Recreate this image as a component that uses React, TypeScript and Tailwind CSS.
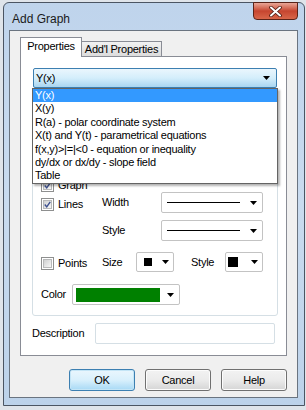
import React from 'react';

const font = { fontFamily: '"Liberation Sans", Arial, sans-serif' };

const Arrow: React.FC = () => (
  <svg width="7" height="4" viewBox="0 0 7 4" className="shrink-0">
    <path d="M0 0 H7 L3.5 4 Z" fill="#000" />
  </svg>
);

const Check: React.FC<{ checked?: boolean }> = ({ checked }) => (
  <div className="w-[13px] h-[13px] shrink-0 border border-[#8e8f8f] bg-white p-px">
    <div className="w-full h-full bg-gradient-to-br from-[#cfd0d1] to-[#f7f7f7] border border-[#b8b9ba] flex items-center justify-center">
      {checked && (
        <svg width="9" height="9" viewBox="0 0 9 9">
          <path d="M1 4.5 L3.5 7.5 L8 1" stroke="#3c4f8f" strokeWidth="1.8" fill="none" />
        </svg>
      )}
    </div>
  </div>
);

const items = [
  'Y(x)',
  'X(y)',
  'R(a) - polar coordinate system',
  'X(t) and Y(t) - parametrical equations',
  'f(x,y)>|=|<0 - equation or inequality',
  'dy/dx or dx/dy - slope field',
  'Table',
];

const Button: React.FC<{ label: string; primary?: boolean }> = ({ label, primary }) => (
  <div
    className={
      primary
        ? 'w-[66px] h-[22px] rounded-[3px] border border-[#3c7fb1] bg-gradient-to-b from-[#eaf6fd] via-[#d9f0fc] to-[#a7d9f5] shadow-[inset_0_0_0_1px_#c4e5f6] flex items-center justify-center'
        : 'w-[66px] h-[22px] rounded-[3px] border border-[#707070] bg-gradient-to-b from-[#f2f2f2] via-[#ebebeb] to-[#d5d5d5] shadow-[inset_0_0_0_1px_#fcfcfc] flex items-center justify-center'
    }
  >
    {label}
  </div>
);

const App: React.FC = () => {
  return (
    <div
      className="w-[306px] h-[410px] bg-[#dfe4ea] pl-[3px] pt-[2px] text-[11px] text-black tracking-[-0.25px] overflow-hidden"
      style={font}
    >
      <div className="w-[302px] h-[404px] border border-[#4b5563] rounded-t-[6px] bg-gradient-to-b from-[#bfd4ec] via-[#c9dbef] to-[#bcd2ea] flex flex-col">
        {/* title bar */}
        <div className="h-[27px] flex items-start justify-between pl-[8px] pr-[6px]">
          <span className="text-[12px] tracking-normal mt-[7px] text-[#1a1a1a]">Add Graph</span>
          <div className="w-[45px] h-[18px] -mt-px rounded-b-[4px] border border-[#5a2318] bg-gradient-to-b from-[#e8a697] via-[#c6452f] to-[#d8664a] flex items-center justify-center">
            <svg width="13" height="11" viewBox="0 0 13 11">
              <path d="M2 1.5 L11 9.5 M11 1.5 L2 9.5" stroke="#4a1a12" strokeWidth="3.6" strokeLinecap="round" />
              <path d="M2 1.5 L11 9.5 M11 1.5 L2 9.5" stroke="#ffffff" strokeWidth="2" strokeLinecap="round" />
            </svg>
          </div>
        </div>

        {/* client */}
        <div className="ml-[5px] w-[289px] h-[368px] border border-[#6a7480] bg-[#f0f0f0] px-[10px] pt-[6px]">
          {/* tabs */}
          <div className="flex items-end h-[19px]">
            <div className="relative z-10 w-[62px] h-[20px] -mb-px border border-b-0 border-[#898c95] bg-white flex items-center justify-center pb-[2px]">
              Properties
            </div>
            <div className="w-[80px] h-[15px] border border-l-0 border-b-0 border-[#898c95] bg-gradient-to-b from-[#f2f2f2] to-[#dcdcdc] flex items-center justify-center">
              Add'l Properties
            </div>
          </div>

          {/* panel */}
          <div className="h-[300px] border border-[#898c95] bg-white px-[11px] pt-[11px]">
            <div className="relative ml-px w-[244px]">
              <div className="h-[20px] rounded-[2px] border border-[#3c7fb1] bg-gradient-to-b from-[#eaf6fd] via-[#d4eefb] to-[#a9d6f1] flex items-center justify-between pl-[2px] pr-[6px]">
                <span>Y(x)</span>
                <Arrow />
              </div>
              <div className="absolute z-20 top-full -left-px w-[246px] border border-[#646464] bg-white shadow-[2px_2px_2px_rgba(0,0,0,0.3)]">
                {items.map((it, i) => (
                  <div
                    key={it}
                    className={
                      i === 0
                        ? 'h-[13.4px] leading-[13.4px] pl-[2px] bg-[#3399ff] text-white whitespace-nowrap'
                        : 'h-[13.4px] leading-[13.4px] pl-[2px] whitespace-nowrap'
                    }
                  >
                    {it}
                  </div>
                ))}
              </div>
            </div>

            {/* group box */}
            <div className="mt-[8px] w-[246px] h-[220px] border border-[#d5dfe5] rounded-[3px] pl-[8px] pt-[82px]">
              <div className="flex items-center h-[13px] gap-[4px]">
                <Check checked />
                <span>Graph</span>
              </div>
              <div className="flex items-center h-[21px]">
                <div className="w-[61px] flex items-center gap-[4px] pt-[4px]">
                  <Check checked />
                  <span>Lines</span>
                </div>
                <span className="w-[59px]">Width</span>
                <div className="w-[102px] h-[21px] rounded-[2px] border border-[#c3c3c3] bg-white flex items-center pl-[5px] pr-[5px] gap-[10px]">
                  <div className="w-[75px] h-px bg-black" />
                  <Arrow />
                </div>
              </div>
              <div className="flex items-center h-[21px] mt-[7px]">
                <div className="w-[61px]" />
                <span className="w-[59px]">Style</span>
                <div className="w-[102px] h-[21px] rounded-[2px] border border-[#c3c3c3] bg-white flex items-center pl-[5px] pr-[5px] gap-[10px]">
                  <div className="w-[75px] h-px bg-black" />
                  <Arrow />
                </div>
              </div>
              <div className="flex items-center h-[20px] mt-[11px]">
                <div className="w-[61px] flex items-center gap-[4px] pt-[3px]">
                  <Check />
                  <span>Points</span>
                </div>
                <span className="w-[34px]">Size</span>
                <div className="w-[38px] h-[20px] rounded-[2px] border border-[#c3c3c3] bg-white flex items-center pl-[7px] pr-[4px] justify-between">
                  <div className="w-[8px] h-[8px] bg-black" />
                  <Arrow />
                </div>
                <span className="ml-[17px] w-[34px]">Style</span>
                <div className="w-[38px] h-[20px] rounded-[2px] border border-[#c3c3c3] bg-white flex items-center pl-[2px] pr-[4px] justify-between">
                  <div className="w-[10px] h-[10px] bg-black" />
                  <Arrow />
                </div>
              </div>
              <div className="flex items-center h-[21px] mt-[12px]">
                <span className="w-[31px]">Color</span>
                <div className="w-[108px] h-[21px] rounded-[2px] border border-[#c3c3c3] bg-white flex items-center pl-[3px] pr-[5px] justify-between">
                  <div className="w-[84px] h-[14px] bg-[#008000]" />
                  <Arrow />
                </div>
              </div>
            </div>

            {/* description */}
            <div className="flex items-center mt-[7px] h-[21px]">
              <span className="w-[64px]">Description</span>
              <div className="w-[182px] h-[21px] rounded-[2px] border border-[#d5dfe5] bg-white" />
            </div>
          </div>

          {/* buttons */}
          <div className="flex justify-end gap-[10px] mt-[13px]">
            <Button label="OK" primary />
            <Button label="Cancel" />
            <Button label="Help" />
          </div>
        </div>
      </div>
    </div>
  );
};

export default App;
